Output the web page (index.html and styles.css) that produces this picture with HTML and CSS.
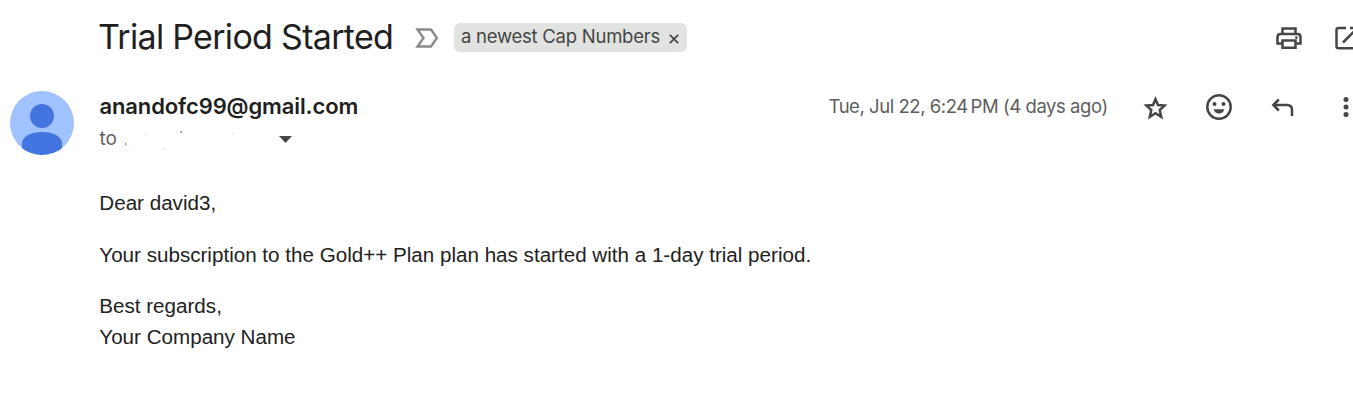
FILE: index.html
```html
<!DOCTYPE html>
<html lang="en">
<head>
<meta charset="utf-8">
<title>Trial Period Started</title>
<link rel="stylesheet" href="styles.css">
</head>
<body>
<main class="mail">
  <header class="subject-bar">
    <h1 class="subject">Trial Period Started</h1>
    <svg class="important" viewBox="0 0 24 20" width="24" height="20"><path d="M2.500 1.500H16L21.900 10L16 18.500H2.500L8.500 10Z"/></svg>
    <div class="label"><span class="label-name">a newest Cap Numbers</span><svg class="label-close" viewBox="0 0 10 10" width="10" height="10"><path d="M.8.8 9.2 9.2M9.2.8.8 9.2"/></svg></div>
    <div class="tools">
      <svg viewBox="0 0 32 32" width="32" height="32" class="line"><path d="M9.500 11.500V6.500H22.500V11.500M9.500 21.500H4.500V15Q4.500 12 7.500 12H24.500Q27.500 12 27.500 15V21.500H22.500M9.500 18.500H22.500V25.800H9.500Z"/><circle cx="23.400" cy="15.600" r="1.300" class="dot"/></svg>
      <svg viewBox="0 0 32 32" width="32" height="32" class="line"><path d="M15 6H7.500Q5.500 6 5.500 8V24.200Q5.500 26.200 7.500 26.200H24.500Q26.500 26.200 26.500 24.200V17M19 6H26.500V13M26.500 6 12 20.500"/></svg>
    </div>
  </header>
  <section class="sender-bar">
    <svg class="avatar" viewBox="0 0 64 64" width="64" height="64"><defs><clipPath id="disc"><circle cx="32" cy="32" r="32"/></clipPath></defs><g clip-path="url(#disc)"><rect class="avatar-bg" width="64" height="64"/><circle class="avatar-fg" cx="32" cy="25" r="12"/><path class="avatar-fg" d="M12 64V53C12 45 21 41 32 41S52 45 52 53V64Z"/></g></svg>
    <div class="sender">
      <div class="address">anandofc99@gmail.com</div>
      <div class="recipient"><span>to</span><svg class="traces" viewBox="0 0 150 24" width="150" height="24"><path d="M7 17h1.2M62.500 5h1.500"/><path class="faint" d="M27 7.500h1.500M46 21.500h2M114 7h2M9 18h2"/></svg><svg class="caret" viewBox="0 0 13 7" width="13" height="7"><path d="M0 0H13L6.500 7Z"/></svg></div>
    </div>
    <time class="date">Tue, Jul 22, 6:24&#8239;PM (4 days ago)</time>
    <div class="actions">
      <svg viewBox="0 0 32 32" width="32" height="32" class="line"><path d="M16.500 8.200 19 14 25.600 14.600 20.700 19 22.200 25.800 16.500 22.200 10.800 25.800 12.300 19 7.400 14.600 14 14Z"/></svg>
      <svg viewBox="0 0 32 32" width="32" height="32" class="line"><circle cx="16" cy="16" r="11.700"/><circle class="dot" cx="11.500" cy="13" r="2"/><circle class="dot" cx="20.500" cy="13" r="2"/><path class="dot" d="M10.500 18.300H21.500Q20 22.500 16 22.500T10.500 18.300Z"/></svg>
      <svg viewBox="0 0 32 32" width="32" height="32" class="line"><path d="M12.800 8.500 7.300 14 12.800 19.500M7.300 14H21Q26 14 26 19V25"/></svg>
      <svg viewBox="0 0 32 32" width="32" height="32" class="line"><circle class="dot" cx="16" cy="8.500" r="2.500"/><circle class="dot" cx="16" cy="16" r="2.500"/><circle class="dot" cx="16" cy="23.500" r="2.500"/></svg>
    </div>
  </section>
  <article class="message">
    <p>Dear david3,</p>
    <p>Your subscription to the Gold++ Plan plan has started with a 1-day trial period.</p>
    <p>Best regards,<br>Your Company Name</p>
  </article>
</main>
</body>
</html>
```
FILE: styles.css
```css
* { box-sizing: border-box; }
body { margin: 0; background: #fff; overflow: hidden; font-family: Inter, "Liberation Sans", sans-serif; color: #1f1f1f; }
.mail { width: 1353px; height: 408px; overflow: hidden; }
.subject-bar { display: flex; align-items: center; height: 75px; padding-left: 98px; }
.subject { width: 294px; margin: 0; padding-bottom: 2px; font-size: 34px; line-height: 43px; font-weight: 400; letter-spacing: -0.700px; white-space: nowrap; }
.important { flex: none; margin-left: 23px; }
.important path { fill: none; stroke: #8a8a8a; stroke-width: 2.4; }
.label { display: flex; align-items: center; flex: none; width: 233px; height: 29px; margin-left: 15px; padding: 0 8px 0 7px; border-radius: 6px; background: #e1e3e1; color: #444746; }
.label-name { width: 200px; padding-bottom: 2px; font-size: 18.500px; line-height: 25px; letter-spacing: -0.250px; white-space: nowrap; }
.label-close { margin: 3px 0 0 8px; flex: none; }
.label-close path { fill: none; stroke: #444746; stroke-width: 1.700; }
.tools { display: flex; flex: none; gap: 26px; margin-left: 586px; }
.line { display: block; flex: none; fill: none; stroke: #444746; stroke-width: 2.500; }
.line .dot { fill: #444746; stroke: none; }
.sender-bar { display: flex; height: 80px; padding: 16px 0 0 10px; }
.avatar { flex: none; }
.avatar-bg { fill: #a0c3ff; }
.avatar-fg { fill: #4374e0; }
.sender { flex: none; width: 729px; margin-left: 25.500px; }
.address { font-size: 22px; line-height: 30px; font-weight: 600; letter-spacing: -0.120px; white-space: nowrap; }
.recipient { display: flex; align-items: center; height: 35px; font-size: 19px; color: #5e5e5e; }
.recipient span { width: 17px; }
.traces { margin-left: 1px; fill: none; stroke: #666; stroke-width: 1.500; }
.faint { stroke: #ddd; stroke-width: 1; }
.caret { margin: 2px 0 0 11px; fill: #444746; }
.date { flex: none; width: 279.500px; font-size: 18.500px; line-height: 31px; letter-spacing: -0.450px; color: #5e5e5e; white-space: nowrap; }
.actions { display: flex; flex: none; gap: 31.500px; margin-left: 31px; }
.message { padding: 32px 0 0 99.300px; font: 20.620px/31px "Liberation Sans", Arial, sans-serif; color: #222; }
.message p { margin: 0 0 20.500px; }
```
